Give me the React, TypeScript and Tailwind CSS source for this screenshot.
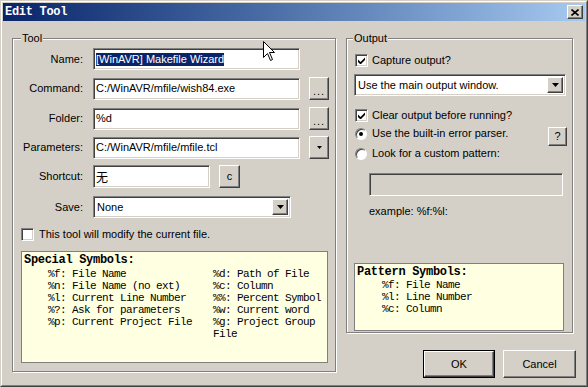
import type { ReactNode } from 'react';

const sunken =
  'border border-t-[#808080] border-l-[#808080] border-r-white border-b-white shadow-[inset_1px_1px_0_#404040,inset_-1px_-1px_0_#d4d0c8]';
const raised =
  'border border-t-white border-l-white border-r-[#404040] border-b-[#404040] shadow-[inset_-1px_-1px_0_#808080] bg-[#d4d0c8]';
const etched = 'border border-[#808080] shadow-[inset_1px_1px_0_#fff,1px_1px_0_#fff]';

const DownArrow = () => (
  <svg width="7" height="4" viewBox="0 0 7 4">
    <path d="M0 0 H7 L3.5 4 Z" fill="#000" />
  </svg>
);

const Check = () => (
  <svg width="7" height="7" viewBox="0 0 7 7">
    <path d="M0 2.5 L2.5 5 L7 0.5 V3 L2.5 7.5 L0 5 Z" fill="#000" />
  </svg>
);

const CheckBox = ({ checked }: { checked?: boolean }) => (
  <div className={`w-[13px] h-[13px] bg-white flex items-center justify-center shrink-0 ${sunken}`}>
    {checked && <Check />}
  </div>
);

const Radio = ({ on }: { on?: boolean }) => (
  <div className="w-[12px] h-[12px] rounded-full bg-white border border-t-[#808080] border-l-[#808080] border-r-white border-b-white shadow-[inset_1px_1px_0_#404040] flex items-center justify-center shrink-0">
    {on && <div className="w-[4px] h-[4px] rounded-full bg-black" />}
  </div>
);

const SmallButton = ({ children, w = 'w-[20px]' }: { children: ReactNode; w?: string }) => (
  <div className={`${w} h-[23px] flex items-center justify-center ${raised}`}>{children}</div>
);

const Dots = () => <span className="mt-[5px] tracking-[1px]">...</span>;

const Combo = ({ value, w }: { value: string; w: string }) => (
  <div className={`${w} h-[22px] bg-white flex items-center justify-between p-[2px] ${sunken}`}>
    <span className="pl-[1px]">{value}</span>
    <div className={`w-[16px] h-full flex items-center justify-center ${raised}`}>
      <DownArrow />
    </div>
  </div>
);

const Row = ({ label, mt, children }: { label: string; mt: string; children: ReactNode }) => (
  <div className={`flex items-center ${mt}`}>
    <div className="w-[70px] text-right">{label}</div>
    <div className="ml-[10px] flex items-center gap-[9px]">{children}</div>
  </div>
);

const Input = ({ w, h = 'h-[22px]', children }: { w: string; h?: string; children?: ReactNode }) => (
  <div className={`${w} ${h} bg-white flex items-center pl-[2px] ${sunken}`}>{children}</div>
);

const special = [
  ['%f: File Name', '%d: Path of File'],
  ['%n: File Name (no ext)', '%c: Column'],
  ['%l: Current Line Number', '%%: Percent Symbol'],
  ['%?: Ask for parameters', '%w: Current word'],
  ['%p: Current Project File', '%g: Project Group'],
  ['', 'File'],
];

export default function App() {
  return (
    <div className="w-[588px] h-[387px] border border-t-[#d4d0c8] border-l-[#d4d0c8] border-r-[#404040] border-b-[#404040] bg-[#d4d0c8] font-['Liberation_Sans',Arial,sans-serif] text-[11px] leading-[13px] text-black relative overflow-hidden">
      <div className="h-full border border-t-white border-l-white border-r-[#808080] border-b-[#808080] p-px flex flex-col">
        {/* Title bar */}
        <div className="h-[18px] bg-linear-to-r from-[#0a246a] to-[#a6caf0] flex items-center justify-between pl-[2px] pr-[2px] shrink-0">
          <span className="font-['Liberation_Mono',monospace] font-bold text-[12px] text-white tracking-[-0.3px]">
            Edit Tool
          </span>
          <div className={`w-[16px] h-[14px] flex items-center justify-center ${raised}`}>
            <svg width="8" height="7" viewBox="0 0 8 7">
              <path d="M0.5 0.5 L7.5 6.5 M7.5 0.5 L0.5 6.5" stroke="#000" strokeWidth="1.6" />
            </svg>
          </div>
        </div>

        <div className="flex pl-[9px] pt-[17px]">
          {/* Tool group */}
          <div className={`relative w-[324px] h-[334px] ${etched}`}>
            <span className="absolute -top-[7px] left-[8px] bg-[#d4d0c8] px-px">Tool</span>
            <div className="flex flex-col pt-[9px]">
              <Row label="Name:" mt="mt-0">
                <Input w="w-[207px]">
                  <span className="bg-[#0a246a] text-white">[WinAVR] Makefile Wizard</span>
                </Input>
              </Row>
              <Row label="Command:" mt="mt-[7px]">
                <Input w="w-[207px]">C:/WinAVR/mfile/wish84.exe</Input>
                <SmallButton>
                  <Dots />
                </SmallButton>
              </Row>
              <Row label="Folder:" mt="mt-[7px]">
                <Input w="w-[207px]">%d</Input>
                <SmallButton>
                  <Dots />
                </SmallButton>
              </Row>
              <Row label="Parameters:" mt="mt-[6px]">
                <Input w="w-[207px]">C:/WinAVR/mfile/mfile.tcl</Input>
                <SmallButton>
                  <svg width="5" height="3" viewBox="0 0 5 3">
                    <path d="M0 0 H5 L2.5 3 Z" fill="#000" />
                  </svg>
                </SmallButton>
              </Row>
              <Row label="Shortcut:" mt="mt-[6px]">
                <Input w="w-[117px]" h="h-[23px]">
                  <span className="font-['Noto_Sans_CJK_SC',sans-serif] text-[12px]">无</span>
                </Input>
                <SmallButton w="w-[21px]">c</SmallButton>
              </Row>
              <Row label="Save:" mt="mt-[8px]">
                <Combo value="None" w="w-[198px]" />
              </Row>
              <div className="flex items-center mt-[10px] ml-[8px] gap-[5px]">
                <CheckBox />
                <span>This tool will modify the current file.</span>
              </div>
              <div className="mt-[10px] ml-[8px] w-[307px] h-[112px] bg-[#ffffe1] border border-[#808080] pt-[2px] pl-[2px] font-['Liberation_Mono',monospace] text-[11px] tracking-[-0.6px] leading-[12px]">
                <div className="font-bold text-[12px] tracking-[-0.3px]">Special Symbols:</div>
                <div className="mt-[2px] pl-[24px] flex flex-col">
                  {special.map(([a, b], i) => (
                    <div key={i} className="flex whitespace-pre">
                      <span className="w-[165px]">{a}</span>
                      <span>{b}</span>
                    </div>
                  ))}
                </div>
              </div>
            </div>
          </div>

          {/* Right column */}
          <div className="ml-[10px] w-[230px] flex flex-col">
            <div className={`relative w-[227px] h-[295px] ${etched}`}>
              <span className="absolute -top-[7px] left-[6px] bg-[#d4d0c8] px-px">Output</span>
              <div className="flex flex-col pt-[15px] pl-[7px]">
                <div className="flex items-center gap-[4px] ml-px">
                  <CheckBox checked />
                  <span>Capture output?</span>
                </div>
                <div className="mt-[7px]">
                  <Combo value="Use the main output window." w="w-[212px]" />
                </div>
                <div className="flex items-center gap-[4px] mt-[13px] ml-px">
                  <CheckBox checked />
                  <span>Clear output before running?</span>
                </div>
                <div className="flex items-start justify-between mt-[5px] ml-px w-[212px]">
                  <div className="flex items-center gap-[5px]">
                    <Radio on />
                    <span>Use the built-in error parser.</span>
                  </div>
                  <div className={`w-[19px] h-[19px] flex items-center justify-center ${raised}`}>?</div>
                </div>
                <div className="flex items-center gap-[5px] mt-px ml-px">
                  <Radio />
                  <span>Look for a custom pattern:</span>
                </div>
                <div className={`mt-[13px] ml-[15px] w-[194px] h-[23px] bg-[#d4d0c8] ${sunken}`} />
                <div className="mt-[9px] ml-[15px]">example: %f:%l:</div>
                <div className="mt-[45px] w-[210px] h-[68px] bg-[#ffffe1] border border-[#808080] pt-[2px] pl-[2px] font-['Liberation_Mono',monospace] text-[11px] tracking-[-0.6px] leading-[12px]">
                  <div className="font-bold text-[12px] tracking-[-0.3px]">Pattern Symbols:</div>
                  <div className="mt-px pl-[25px] flex flex-col whitespace-pre">
                    <span>%f: File Name</span>
                    <span>%l: Line Number</span>
                    <span>%c: Column</span>
                  </div>
                </div>
              </div>
            </div>

            <div className="flex justify-end gap-[8px] mt-[17px]">
              <div className="border border-black">
                <div className={`w-[70px] h-[26px] flex items-center justify-center ${raised}`}>OK</div>
              </div>
              <div className={`w-[73px] h-[28px] flex items-center justify-center ${raised}`}>Cancel</div>
            </div>
          </div>
        </div>
      </div>

      {/* Mouse pointer */}
      <svg className="absolute left-[262px] top-[40px]" width="13" height="21" viewBox="0 0 13 21">
        <path
          d="M0.5 0.5 V16.5 L4.5 12.5 L7.5 19.5 L9.5 18.5 L6.5 11.5 H11.5 Z"
          fill="#fff"
          stroke="#000"
          strokeWidth="1"
        />
      </svg>
    </div>
  );
}
